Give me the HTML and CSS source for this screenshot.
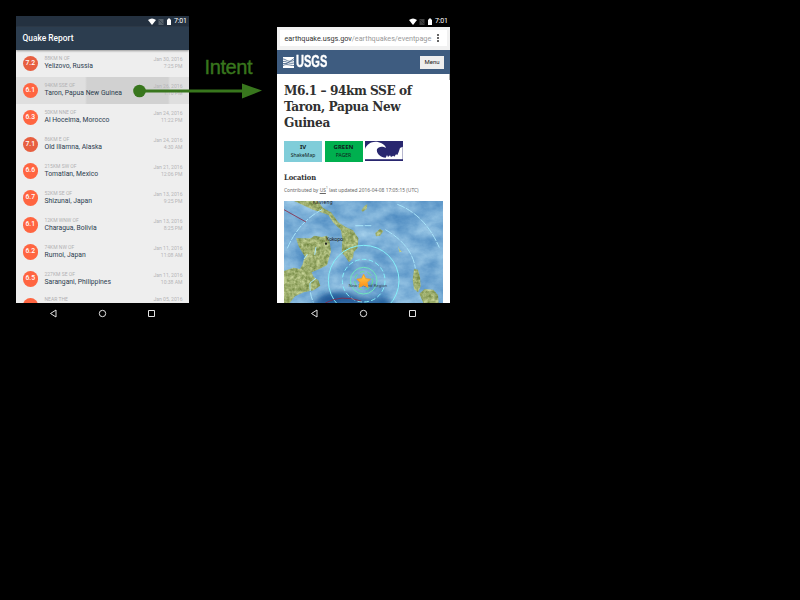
FILE: index.html
```
<!DOCTYPE html>
<html lang="en">
<head>
<meta charset="utf-8">
<title>Quake Report</title>
<link rel="stylesheet" href="styles.css">
</head>
<body>
<main class="stage">
  <section class="phone">
    <header class="status status-app">
      <svg class="status-icons" viewBox="0 0 26 8"><path d="M0 2Q4-1 8 2L4 7Z" fill="#fff"/><path d="M10.500 7V1h5v6z" fill="#56616b"/><path d="M11 2l4 4" stroke="#3b4753"/><path d="M19 1.500h1V.5h2v1h1V7h-4z" fill="#fff"/></svg><span>7:01</span>
    </header>
    <div class="toolbar">Quake Report</div>
    <ul class="quakes">
      <li class="quake"><b class="mag strong">7.2</b><div class="place"><small>88KM N OF</small><span>Yelizovo, Russia</span></div><div class="when">Jan 30, 2016<br>7:25 PM</div></li>
      <li class="quake pressed"><b class="mag">6.1</b><div class="place"><small>94KM SSE OF</small><span>Taron, Papua New Guinea</span></div><div class="when">Jan 26, 2016<br>1:10 PM</div></li>
      <li class="quake"><b class="mag">6.3</b><div class="place"><small>50KM NNE OF</small><span>Al Hoceima, Morocco</span></div><div class="when">Jan 24, 2016<br>11:22 PM</div></li>
      <li class="quake"><b class="mag strong">7.1</b><div class="place"><small>86KM E OF</small><span>Old Iliamna, Alaska</span></div><div class="when">Jan 24, 2016<br>4:30 AM</div></li>
      <li class="quake"><b class="mag">6.6</b><div class="place"><small>215KM SW OF</small><span>Tomatlan, Mexico</span></div><div class="when">Jan 21, 2016<br>12:06 PM</div></li>
      <li class="quake"><b class="mag">6.7</b><div class="place"><small>52KM SE OF</small><span>Shizunai, Japan</span></div><div class="when">Jan 13, 2016<br>9:25 PM</div></li>
      <li class="quake"><b class="mag">6.1</b><div class="place"><small>12KM WNW OF</small><span>Charagua, Bolivia</span></div><div class="when">Jan 13, 2016<br>8:25 PM</div></li>
      <li class="quake"><b class="mag">6.2</b><div class="place"><small>74KM NW OF</small><span>Rumoi, Japan</span></div><div class="when">Jan 11, 2016<br>11:08 AM</div></li>
      <li class="quake"><b class="mag">6.5</b><div class="place"><small>227KM SE OF</small><span>Sarangani, Philippines</span></div><div class="when">Jan 11, 2016<br>10:38 AM</div></li>
      <li class="quake last"><b class="mag"></b><div class="place"><small>NEAR THE</small></div><div class="when">Jan 05, 2016</div></li>
    </ul>
    <nav class="nav"><svg viewBox="0 0 173 22"><path d="M40 7v7l-5.500-3.500zM132.500 7.500h6v6h-6z"/><circle cx="86.500" cy="10.500" r="3.200"/></svg></nav>
  </section>

  <section class="phone">
    <header class="status">
      <svg class="status-icons" viewBox="0 0 26 8"><path d="M0 2Q4-1 8 2L4 7Z" fill="#fff"/><path d="M10.500 7V1h5v6z" fill="#3c3c3c"/><path d="M11 2l4 4" stroke="#222"/><path d="M19 1.500h1V.5h2v1h1V7h-4z" fill="#fff"/></svg><span>7:01</span>
    </header>
    <div class="browser"><div class="url"><span>earthquake.usgs.gov<i>/earthquakes/eventpage</i></span><svg class="dots" viewBox="0 0 2 8"><path d="M0 0h2v2H0zM0 3h2v2H0zM0 6h2v2H0z"/></svg></div></div>
    <div class="site">
      <div class="brand"><svg viewBox="0 0 11 11"><path fill="#fff" d="M0 0h11v11H0z"/><path d="M0 2c3 0 5 4 11 1.500M0 4.500c3-1 5 3 11 1.500M0 6.500l4 0 7-5M0 8.500c4-2 6 0 11 0" fill="none" stroke="#3e5c80" stroke-width=".8"/></svg><b>USGS</b></div>
      <span class="menu">Menu</span>
    </div>
    <article class="event">
      <h1><span class="wide">M6.1 – 94km SSE of</span><br>Taron, Papua New<br>Guinea</h1>
      <div class="badges">
        <div class="badge shake"><b>IV</b><span>ShakeMap</span></div>
        <div class="badge pager"><b>GREEN</b><span>PAGER</span></div>
        <svg class="wave" viewBox="0 0 114 60" preserveAspectRatio="none"><path fill="#29276f" d="M0 0h114v60H0z"/><path fill="#fff" d="M0 24C6 8 24-1 41 4c13 3 21 11 22 17-9-6-23-6-27 4-3 12 10 24 26 25l4-8 3 6 6-5 3 5 7-4 3 3 5-7 4 2 4-9 4-12 8-4v38H0z"/><path stroke="#29276f" stroke-width="3" fill="none" d="M0 58h114"/></svg>
      </div>
      <h2>Location</h2>
      <p class="credit">Contributed by <u>US</u><sup>1</sup> last updated 2016-04-08 17:05:15 (UTC)</p>
      <svg class="map" viewBox="36 18 477 306" preserveAspectRatio="none">
        <defs>
          <filter id="sea" x="0" y="0" width="1" height="1" color-interpolation-filters="sRGB"><feTurbulence type="fractalNoise" baseFrequency=".014 .02" numOctaves="5" seed="8"/><feColorMatrix values=".45 0 0 0 .25  .36 0 0 0 .5  .22 0 0 0 .73  0 0 0 0 1"/></filter>
          <filter id="relief" x="0" y="0" width="1" height="1" color-interpolation-filters="sRGB"><feTurbulence type="fractalNoise" baseFrequency=".09" numOctaves="3" seed="3"/><feColorMatrix values=".5 0 0 0 .37  .45 0 0 0 .46  .5 0 0 0 .18  0 0 0 0 1"/><feComposite in2="SourceGraphic" operator="in"/></filter>
          <filter id="soft" x="-.3" y="-.6" width="1.600" height="2.200"><feGaussianBlur stdDeviation="10"/></filter>
          <linearGradient id="gold" x2="0" y2="1"><stop stop-color="#ffd34a"/><stop offset="1" stop-color="#ff8b16"/></linearGradient>
        </defs>
        <rect x="36" y="18" width="477" height="306" filter="url(#sea)"/>
        <path d="M120 334c10-30 50-45 90-42s60 30 130 18l30 24z" fill="#15508f" opacity=".85" filter="url(#soft)"/>
        <g filter="url(#relief)"><path d="M66 18h72l14 20 25 14 22 30 22 14 22 10 16 24-2 28-12 14-2 16-12 14-12-18-10-12 2-40-4-26-24-24-14-22-16-6-30-10z"/><path d="M72 130h45l10-8 22 4 16-4 8 18 4 30-12 40-18 10-28 12 6 14 14 10 6 16-20 14-30 6-26 12-16 20H36v-96l28-10 20 4 8-14 6-24-18-30z"/><path d="M426 222l12 2 6 22 2 28-8 18-12-10-4-28zM442 296l16-14 26 2 14 16 2 24h-46zM268 46l10-14 8-4-2 14-12 8zM310 114l14-12 10 6-10 14-12 2zM378 152l4 10 8 8-8 2z"/></g>
        <g fill="none" stroke="#84f0fa" stroke-width="3"><circle cx="275" cy="257" r="106"/><circle cx="275" cy="257" r="64" stroke-dasharray="14 7"/><circle cx="275" cy="257" r="40" stroke="#70e5bc"/><circle cx="275" cy="257" r="27" stroke="#65df90" stroke-dasharray="14 9"/><path d="M46 160Q80 80 150 44M376 28Q460 60 502 158M250 92h48M340 104Q420 150 430 220M114 264q-2 30 10 58M96 192l10-14M132 156l-4 24M114 264l18-14" stroke="#a8e4fa" stroke-width="3" stroke-dasharray="24 4"/></g>
        <path d="M36 44l66 37M160 324q45-26 108-6" fill="none" stroke="#8a2946" stroke-width="2.500"/>
        <g font-family="Noto Sans,sans-serif" fill="#222"><text x="122" y="26" font-size="14" textLength="60">Kavieng</text><rect x="159" y="143" width="6" height="6"/><text x="162" y="139" font-size="16" textLength="52">Kokopo</text><text x="230" y="276" font-size="12" fill="#344" textLength="116">New Ireland Region</text></g>
        <path d="M275 238l6 13 14 2-10 9 3 15-13-7-13 7 2-15-9-9 14-2z" fill="url(#gold)" stroke="#f5a126" stroke-width="3"/>
      </svg>
      <i class="scroll"></i>
    </article>
    <nav class="nav"><svg viewBox="0 0 173 22"><path d="M40 7v7l-5.500-3.500zM132.500 7.500h6v6h-6z"/><circle cx="86.500" cy="10.500" r="3.200"/></svg></nav>
  </section>
  <div class="intent">Intent</div>
  <svg class="arrow" viewBox="0 0 132 16"><circle cx="6.500" cy="8" r="6.300"/><path d="M6 6.500h103V.5L129 7.500l-20 8V9.500H6z"/></svg>
</main>
</body>
</html>
```
FILE: styles.css
```
* { box-sizing: border-box; }
body { margin: 0; background: #000; font-family: Roboto, sans-serif; }
.stage { position: relative; display: flex; gap: 88px; width: 800px; height: 600px; padding: 16px; align-items: flex-start; }
.phone { width: 173px; height: 309px; display: flex; flex-direction: column; overflow: hidden; flex: none; }
.status { height: 11px; flex: none; display: flex; justify-content: flex-end; align-items: center; padding-right: 2px; color: #fff; font-size: 7px; line-height: 11px; }
.status span { width: 13px; white-space: nowrap; letter-spacing: -.2px; }
.status-icons { width: 26px; height: 8px; }
.status-app { background: #243140; }
.toolbar { height: 23px; flex: none; background: #2c3d4f; color: #fff; font-size: 8.400px; font-weight: 500; line-height: 23px; padding-left: 6.500px; position: relative; box-shadow: 0 1px 2px #999; z-index: 1; }
.quakes { list-style: none; margin: 0; padding: 0; background: #eee; height: 253px; overflow: hidden; }
.quake { height: 26.950px; display: flex; align-items: center; padding: 0 6.500px; }
.pressed { background: linear-gradient(90deg, #dfdfdf 69px, #d1d1d1 71px 152px, #dfdfdf 154px); }
.mag { width: 15.500px; height: 15.500px; border-radius: 50%; background: #ff6541; color: #fff; font-size: 6.800px; line-height: 15.500px; text-align: center; font-weight: 500; flex: none; }
.strong { background: #e75f40; }
.place { margin-left: 6.500px; flex: 1; white-space: nowrap; }
.place small { display: block; color: #b1b1b3; font-size: 5px; line-height: 7px; }
.place span { display: block; color: #2b3c4e; font-size: 6.800px; line-height: 9px; }
.when { text-align: right; color: #b5b5b7; font-size: 5.100px; line-height: 7px; white-space: nowrap; }
.last { align-items: flex-start; padding-top: 5.500px; }
.last .place, .last .when { margin-top: -1.500px; }
.nav { height: 22px; background: #000; flex: none; }
.nav svg { display: block; width: 173px; height: 22px; fill: none; stroke: #e4e4e4; stroke-width: 1; }
.browser { height: 23px; flex: none; background: #f1f1f1; padding: 3px 3px 4px; }
.url { height: 16px; background: #fff; display: flex; align-items: center; justify-content: space-between; padding: 0 8px 0 4.500px; font-size: 7.250px; color: #333; white-space: nowrap; }
.url i { font-style: normal; color: #999; }
.dots { width: 2px; height: 8px; fill: #666; }
.site { height: 24px; flex: none; background: #3e5c80; display: flex; align-items: center; justify-content: space-between; padding: 0 6px; }
.brand { display: flex; gap: 2px; align-items: center; color: #fff; font: bold 16px/16px "Liberation Sans", sans-serif; }
.brand svg { width: 11px; height: 11px; }
.brand b { transform: scaleX(.69); transform-origin: left; -webkit-text-stroke: .4px #fff; }
.menu { width: 24px; height: 13px; background: #eee; color: #222; font-size: 6px; line-height: 12px; text-align: center; }
.event { position: relative; height: 229px; flex: none; overflow: hidden; background: #fff; padding: 8px 7px 0; color: #303030; font-family: "Noto Sans", sans-serif; }
h1 { margin: 0; font: bold 13.500px/16px "DejaVu Serif Condensed", "DejaVu Serif", serif; letter-spacing: -.4px; white-space: nowrap; }
.wide { letter-spacing: -.45px; }
.badges { display: flex; gap: 2.500px; margin-top: 11px; height: 21px; }
.badge { width: 38px; height: 21px; text-align: center; color: #102020; padding-top: 2px; }
.badge b, .badge span { display: block; font-size: 6px; line-height: 8px; }
.badge span { font-size: 5px; }
.shake { background: #80cdd9; }
.pager { background: #00b04f; }
.wave { width: 38px; height: 20px; }
h2 { margin: 10px 0 0; font: bold 7.500px/12px "DejaVu Serif Condensed", "DejaVu Serif", serif; letter-spacing: -.1px; }
.credit { margin: 2px 0 0; height: 9px; font-size: 4.900px; line-height: 8px; white-space: nowrap; color: #666; }
.credit sup { font-size: 3px; line-height: 0; }
.map { display: block; width: 159px; height: 102px; margin-top: 6px; }
.scroll { position: absolute; top: 0; right: 0; width: 1px; height: 6px; background: #aaa; }
.intent { position: absolute; left: 204.500px; top: 56px; color: #38761d; font: 20px/22px "Liberation Sans", sans-serif; letter-spacing: -.4px; -webkit-text-stroke: .4px #38761d; }
.arrow { position: absolute; left: 133px; top: 83px; width: 132px; height: 16px; fill: #38761d; }
```
